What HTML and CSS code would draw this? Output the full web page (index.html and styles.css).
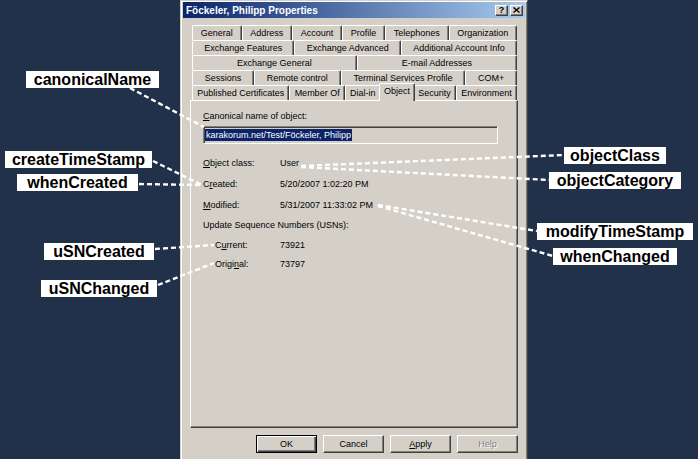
FILE: index.html
```html
<!DOCTYPE html>
<html lang="en">
<head>
    <meta charset="UTF-8">
    <title>Föckeler, Philipp Properties</title>
    <link rel="stylesheet" href="styles.css">
</head>
<body>
<div class="scene">
    <div class="dialog">
        <div class="titlebar">
            <span class="title">Föckeler, Philipp Properties</span>
            <div class="caption-btns">
                <div class="cap-btn">?</div>
                <div class="cap-btn">
                    <svg width="7" height="6" viewBox="0 0 7 6"><path d="M0.5 0.5 L6.5 5.5 M6.5 0.5 L0.5 5.5" stroke="#000" stroke-width="1.4" fill="none"/></svg>
                </div>
            </div>
        </div>
        <div class="sheet">
            <div class="tab-row">
                <div class="tab">General</div>
                <div class="tab">Address</div>
                <div class="tab">Account</div>
                <div class="tab">Profile</div>
                <div class="tab">Telephones</div>
                <div class="tab">Organization</div>
            </div>
            <div class="tab-row">
                <div class="tab">Exchange Features</div>
                <div class="tab">Exchange Advanced</div>
                <div class="tab">Additional Account Info</div>
            </div>
            <div class="tab-row">
                <div class="tab">Exchange General</div>
                <div class="tab">E-mail Addresses</div>
            </div>
            <div class="tab-row">
                <div class="tab">Sessions</div>
                <div class="tab">Remote control</div>
                <div class="tab">Terminal Services Profile</div>
                <div class="tab">COM+</div>
            </div>
            <div class="tab-row front">
                <div class="tab">Published Certificates</div>
                <div class="tab">Member Of</div>
                <div class="tab">Dial-in</div>
                <div class="tab active">Object</div>
                <div class="tab">Security</div>
                <div class="tab">Environment</div>
            </div>
            <div class="panel">
                <div class="field-label"><u>C</u>anonical name of object:</div>
                <div class="edit"><span class="sel">karakorum.net/Test/Föckeler, Philipp</span></div>
                <div class="row first"><span class="k"><u>O</u>bject class:</span><span>User</span></div>
                <div class="row"><span class="k">C<u>r</u>eated:</span><span>5/20/2007 1:02:20 PM</span></div>
                <div class="row"><span class="k"><u>M</u>odified:</span><span>5/31/2007 11:33:02 PM</span></div>
                <div class="row usn">Update Sequence Numbers (USNs):</div>
                <div class="row sub"><span class="k">C<u>u</u>rrent:</span><span>73921</span></div>
                <div class="row sub last"><span class="k">Origi<u>n</u>al:</span><span>73797</span></div>
            </div>
            <div class="buttons">
                <div class="btn default"><span class="focus">OK</span></div>
                <div class="btn">Cancel</div>
                <div class="btn"><span><u>A</u>pply</span></div>
                <div class="btn disabled">Help</div>
            </div>
        </div>
    </div>

    <svg class="leaders" width="698" height="459" viewBox="0 0 698 459">
        <g stroke="#fff" stroke-width="2.4" stroke-dasharray="5 3" fill="none">
            <line x1="130" y1="88" x2="204" y2="127"/>
            <line x1="153" y1="161" x2="202" y2="185"/>
            <line x1="139" y1="184" x2="202" y2="185"/>
            <line x1="301" y1="166" x2="564" y2="155"/>
            <line x1="301" y1="167" x2="549" y2="180"/>
            <line x1="378" y1="205" x2="537" y2="231"/>
            <line x1="378" y1="206" x2="553" y2="256"/>
            <line x1="155" y1="249" x2="214" y2="245"/>
            <line x1="158" y1="285" x2="214" y2="263"/>
        </g>
    </svg>

    <div class="callout c-canonical">canonicalName</div>
    <div class="callout c-createts">createTimeStamp</div>
    <div class="callout c-whencreated">whenCreated</div>
    <div class="callout c-usncreated">uSNCreated</div>
    <div class="callout c-usnchanged">uSNChanged</div>
    <div class="callout c-objclass">objectClass</div>
    <div class="callout c-objcat">objectCategory</div>
    <div class="callout c-modifyts">modifyTimeStamp</div>
    <div class="callout c-whenchanged">whenChanged</div>
</div>
</body>
</html>
```

FILE: styles.css
```css
body {
    margin: 0;
    background: #22314a;
    font-family: "Liberation Sans", Arial, sans-serif;
    font-size: 9px;
    color: #000;
    overflow: hidden;
}
.scene {
    position: relative;
    width: 698px;
    height: 459px;
    overflow: hidden;
}
.dialog {
    width: 348px;
    height: 475px;
    margin-left: 180px;
    box-sizing: border-box;
    background: #d4d0c8;
    border: 1px solid;
    border-color: #d4d0c8 #404040 #404040 #d4d0c8;
    box-shadow: inset 1px 1px #fff, inset -1px -1px #808080;
    padding: 1px 2px;
}
.titlebar {
    height: 16px;
    display: flex;
    align-items: center;
    justify-content: space-between;
    background: linear-gradient(to right, #0a246a, #a6caf0);
    padding: 0 2px 0 3px;
}
.title {
    color: #fff;
    font-weight: bold;
    font-size: 10px;
}
.caption-btns {
    display: flex;
    gap: 2px;
}
.cap-btn {
    width: 13px;
    height: 11px;
    box-sizing: border-box;
    background: #d4d0c8;
    border: 1px solid;
    border-color: #fff #404040 #404040 #fff;
    box-shadow: inset -1px -1px #808080;
    display: flex;
    align-items: center;
    justify-content: center;
    font-weight: bold;
    font-size: 9px;
    line-height: 1;
}
.sheet {
    padding: 7px 7px 0;
}
.tab-row {
    display: flex;
    align-items: flex-end;
    height: 15px;
    margin: 0 1px 0 2px;
}
.tab {
    flex: 1 1 auto;
    height: 15px;
    box-sizing: border-box;
    background: #d4d0c8;
    border-top: 1px solid #fff;
    border-left: 1px solid #fff;
    border-right: 1px solid #404040;
    box-shadow: inset -1px 0 #808080;
    border-radius: 2px 2px 0 0;
    text-align: center;
    line-height: 14px;
    white-space: nowrap;
}
.tab.active {
    height: 18px;
    margin: -2px -2px -1px;
    position: relative;
    z-index: 1;
}
.panel {
    height: 328px;
    box-sizing: border-box;
    border: 1px solid;
    border-color: #fff #404040 #404040 #fff;
    box-shadow: inset -1px -1px #808080;
    padding: 9px 0 0 12px;
}
.field-label {
    line-height: 12px;
}
.edit {
    margin-top: 4px;
    width: 295px;
    height: 18px;
    box-sizing: border-box;
    border: 1px solid;
    border-color: #808080 #fff #fff #808080;
    box-shadow: inset 1px 1px #404040, inset -1px -1px #d4d0c8;
    padding: 2px 0 0 1px;
}
.sel {
    display: inline-block;
    background: #0a246a;
    color: #fff;
    line-height: 12px;
    padding: 0 1px;
}
.row {
    display: flex;
    line-height: 12px;
    margin-top: 9px;
}
.row.first {
    margin-top: 13px;
}
.row.usn,
.row.sub {
    margin-top: 8px;
}
.row.sub {
    padding-left: 12px;
}
.row.sub.last {
    margin-top: 7px;
}
.row .k {
    width: 77px;
}
.row.sub .k {
    width: 65px;
}
.buttons {
    display: flex;
    justify-content: flex-end;
    gap: 6px;
    margin-top: 7px;
}
.btn {
    width: 61px;
    height: 18px;
    box-sizing: border-box;
    border: 1px solid;
    border-color: #fff #404040 #404040 #fff;
    box-shadow: inset -1px -1px #808080;
    display: flex;
    align-items: center;
    justify-content: center;
}
.btn.default {
    border-color: #000;
    box-shadow: inset 1px 1px #fff, inset -1px -1px #404040, inset -2px -2px #808080;
}
.btn.disabled {
    color: #808080;
    text-shadow: 1px 1px #fff;
}
.leaders {
    position: absolute;
    left: 0;
    top: 0;
}
.callout {
    position: absolute;
    height: 17px;
    background: #fff;
    color: #000;
    font: bold 16px "Liberation Sans", Arial, sans-serif;
    line-height: 17px;
    text-align: center;
    white-space: nowrap;
}
.c-canonical { left: 26px; top: 71px; width: 133px; }
.c-createts { left: 5px; top: 151px; width: 147px; }
.c-whencreated { left: 17px; top: 174px; width: 121px; }
.c-usncreated { left: 44px; top: 243px; width: 110px; }
.c-usnchanged { left: 41px; top: 280px; width: 116px; }
.c-objclass { left: 564px; top: 147px; width: 102px; }
.c-objcat { left: 549px; top: 172px; width: 132px; }
.c-modifyts { left: 537px; top: 223px; width: 156px; }
.c-whenchanged { left: 553px; top: 248px; width: 124px; }
```
